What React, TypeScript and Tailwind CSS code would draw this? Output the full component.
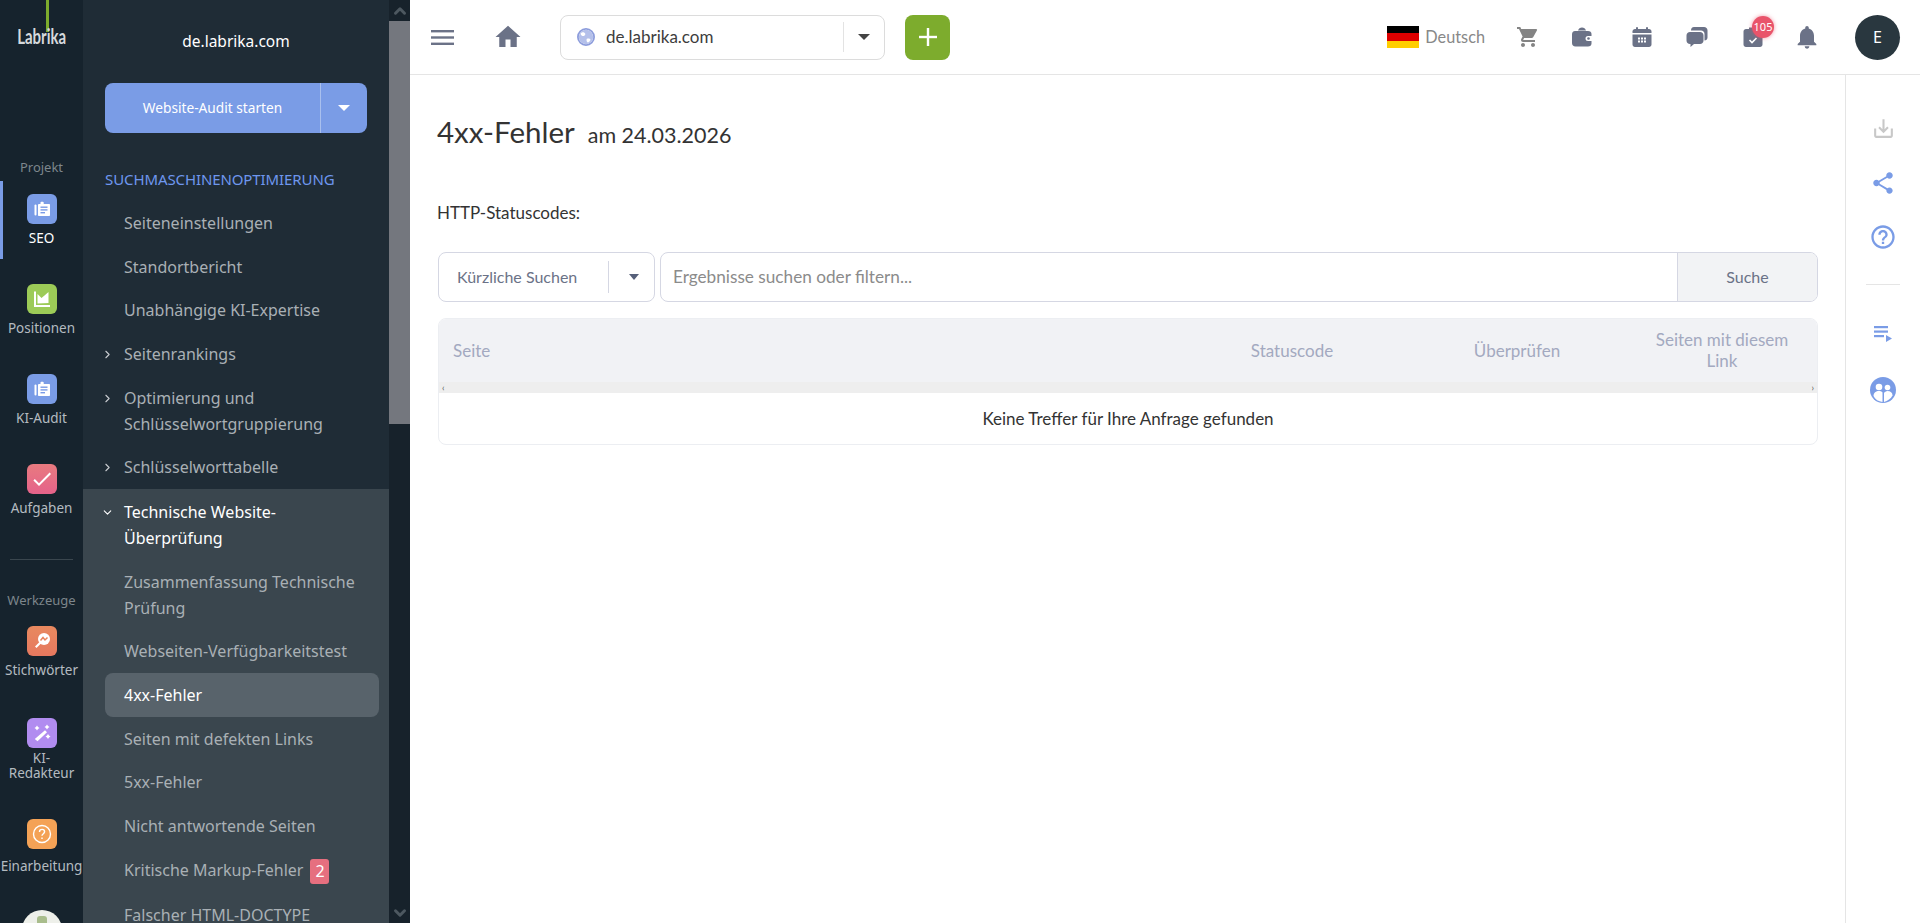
import { MdHome, MdShoppingCart, MdNotifications, MdShare, MdHelpOutline, MdSaveAlt, MdOutlineCheck } from "react-icons/md";
import { FiChevronRight, FiChevronDown, FiChevronUp } from "react-icons/fi";

const pt = "font-['Lato','Noto_Sans',sans-serif]";

function ClipboardIcon() {
  return (
    <svg viewBox="0 0 20 20" className="w-[20px] h-[20px]" fill="#fff">
      <path d="M7 5h1.5V3.6c0-.5.4-.9.9-.9h1.4c.5 0 .9.4.9.9V5H17c.6 0 1 .4 1 1v10c0 .6-.4 1-1 1H7c-.5 0-1-.4-1-1V6c0-.5.5-1 1-1z" />
      <rect x="2.5" y="5.5" width="2" height="11" rx="1" />
      <rect x="8.5" y="7.5" width="7" height="1.4" fill="#7a9ce6" />
      <rect x="8.5" y="10.2" width="7" height="1.4" fill="#7a9ce6" />
      <rect x="8.5" y="13" width="4.5" height="1.4" fill="#7a9ce6" />
    </svg>
  );
}

function ChartIcon() {
  return (
    <svg viewBox="0 0 20 20" className="w-[20px] h-[20px]" fill="#fff">
      <path d="M2 2.5h2V16h14v2H2z" />
      <path d="M5.5 14.5V5l4 4 3-2.5 4-3.5v11z" />
    </svg>
  );
}

function MagnifierIcon() {
  return (
    <svg viewBox="0 0 20 20" className="w-[20px] h-[20px]" fill="#fff">
      <circle cx="12" cy="8" r="6" />
      <path d="M7.5 11 3 15.5 4.5 17 9 12.5z" />
      <path d="M8.5 9.5 11 6.5l2 2.5 2.5-2.5" fill="none" stroke="#e8835c" strokeWidth="1.5" />
    </svg>
  );
}

function WandIcon() {
  return (
    <svg viewBox="0 0 20 20" className="w-[20px] h-[20px]" fill="#fff">
      <path d="M13 7.2 15 9.2 5.5 18.2 2.8 16z" />
      <path d="M5 2.5 6 4l1.5 1L6 6 5 7.5 4 6 2.5 5 4 4zM15 1.5 16 3l1.5 1L16 5l-1 1.5L14 5l-1.5-1L14 3zM16 11l1 1.5 1.5 1-1.5 1-1 1.5-1-1.5-1.5-1 1.5-1z" />
    </svg>
  );
}

function RailItem({ label, bg, active, spacing = "mb-[12px]", labelGap = "mt-[6px]", children }: { label: React.ReactNode; bg: string; active?: boolean; spacing?: string; labelGap?: string; children: React.ReactNode }) {
  return (
    <div className={`shrink-0 flex flex-col items-center pt-[13px] min-h-[78px] ${spacing} ${active ? "border-l-[3px] border-[#7a9ce6] text-white pr-[3px]" : "text-[#b4bbc0]"}`}>
      <div className={`w-[30px] h-[30px] rounded-[6px] flex items-center justify-center ${bg}`}>{children}</div>
      <div className={`${labelGap} text-[13.5px] leading-[17px] text-center`}>{label}</div>
    </div>
  );
}

function NavItem({ label, arrow, current, open, badge }: { label: React.ReactNode; arrow?: "right" | "down"; current?: boolean; open?: boolean; badge?: string }) {
  return (
    <div className={`relative pl-[19px] pr-[10px] py-[8.85px] text-[16px] leading-[26px] whitespace-nowrap rounded-[8px] ${current ? "bg-[#58636b] text-white" : open ? "text-white" : "text-[#a9b0b5]"}`}>
      {arrow === "right" && <FiChevronRight className="absolute left-[-4px] top-[16px] w-[13px] h-[13px] text-[#c8ccd0]" />}
      {arrow === "down" && <FiChevronDown className="absolute left-[-4px] top-[16px] w-[13px] h-[13px] text-white" />}
      {label}
      {badge && <span className="inline-block align-middle ml-[7px] w-[19px] h-[25px] leading-[25px] text-center rounded-[3px] bg-[#e66f7f] text-white">{badge}</span>}
    </div>
  );
}

function TopIconSlot({ children }: { children: React.ReactNode }) {
  return <div className="flex items-center justify-center w-[20px] h-[24px] text-[#6b7287] [&>svg]:shrink-0">{children}</div>;
}

export default function App() {
  return (
    <div className="flex h-[923px] w-[1920px] overflow-hidden bg-white font-['Noto_Sans',sans-serif]">
      {/* Icon rail */}
      <aside className="w-[83px] shrink-0 bg-[#16232d] flex flex-col">
        <div className="h-[151px] shrink-0 flex flex-col items-center">
          <div className="w-[3px] h-[32px] ml-[12px] bg-[#7dac2d]" />
          <div className="mt-[-5px] text-[#d5d9dc] text-[20px] leading-[18px] font-bold font-['Liberation_Sans_Narrow','Lato',sans-serif] scale-x-[0.75]">Labrika</div>
        </div>
        <div className="shrink-0 text-center text-[13px] leading-[18px] text-[#7d868c] mt-[7px] mb-[5px]">Projekt</div>
        <RailItem label="SEO" bg="bg-[#7a9ce6]" active><ClipboardIcon /></RailItem>
        <RailItem label="Positionen" bg="bg-[#9ccb57]"><ChartIcon /></RailItem>
        <RailItem label="KI-Audit" bg="bg-[#7a9ce6]"><ClipboardIcon /></RailItem>
        <RailItem label="Aufgaben" bg="bg-gradient-to-b from-[#e87a7f] to-[#e5628a]"><MdOutlineCheck className="w-[24px] h-[24px] text-white" /></RailItem>
        <div className="shrink-0 mx-[10px] mt-[18px] border-t border-[#3a464e]" />
        <div className="shrink-0 text-center text-[13px] leading-[18px] text-[#7d868c] mt-[31px] mb-[4px]">Werkzeuge</div>
        <RailItem label="Stichwörter" bg="bg-gradient-to-b from-[#e8895f] to-[#e6785f]" spacing="mb-[14px]"><MagnifierIcon /></RailItem>
        <RailItem label={<span className="block leading-[15px]">KI-<br />Redakteur</span>} labelGap="mt-[3px]" bg="bg-[#b18cf0]" spacing="mb-[23px]"><WandIcon /></RailItem>
        <RailItem label="Einarbeitung" labelGap="mt-[9px]" bg="bg-[#f4a256]" spacing="mb-[11px]">
          <svg viewBox="0 0 20 20" className="w-[20px] h-[20px]" fill="none" stroke="#fff" strokeWidth="1.4">
            <circle cx="10" cy="10" r="8.5" />
            <path d="M7.5 8c0-1.6 1.1-2.6 2.6-2.6S12.6 6.400 12.600 7.800c0 1.800-2.600 2-2.600 4" />
            <path d="M10 13.500v1.500" />
          </svg>
        </RailItem>
        <div className="mt-[15px] mx-auto w-[40px] h-[40px] rounded-full bg-[#eef0ea] shrink-0 flex justify-center pt-[6px]">
          <div className="w-[10px] h-[10px] rounded-[3px] bg-[#a9bd8c]" />
        </div>
      </aside>

      {/* Nav panel */}
      <nav className="w-[306px] shrink-0 bg-[#1f2c36] flex flex-col overflow-hidden">
        <div className="h-[83px] pt-[1px] flex items-center justify-center text-white text-[15.5px]">de.labrika.com</div>
        <div className="mx-[22px] w-[262px] h-[50px] shrink-0 rounded-[8px] bg-[#7a9ce6] flex text-white text-[13.7px]">
          <div className="w-[216px] flex items-center justify-center border-r border-[#a9c0ee]">Website-Audit starten</div>
          <div className="flex-1 flex items-center justify-center">
            <span className="w-0 h-0 border-x-[6px] border-x-transparent border-t-[6px] border-t-white" />
          </div>
        </div>
        <div className="ml-[22px] mt-[33px] text-[#6e97ee] text-[15px] leading-[26px] tracking-[-0.1px]">SUCHMASCHINENOPTIMIERUNG</div>
        <div className="mt-[9px] px-[22px]">
          <NavItem label="Seiteneinstellungen" />
          <NavItem label="Standortbericht" />
          <NavItem label="Unabhängige KI-Expertise" />
          <NavItem label="Seitenrankings" arrow="right" />
          <NavItem label={<>Optimierung und<br />Schlüsselwortgruppierung</>} arrow="right" />
          <NavItem label="Schlüsselworttabelle" arrow="right" />
        </div>
        <div className="bg-[#3a464e] pt-[1px] px-[22px] pr-[10px] flex-1 min-h-0">
          <NavItem label={<>Technische Website-<br />Überprüfung</>} arrow="down" open />
          <NavItem label={<>Zusammenfassung Technische<br />Prüfung</>} />
          <NavItem label="Webseiten-Verfügbarkeitstest" />
          <NavItem label="4xx-Fehler" current />
          <NavItem label="Seiten mit defekten Links" />
          <NavItem label="5xx-Fehler" />
          <NavItem label="Nicht antwortende Seiten" />
          <NavItem label="Kritische Markup-Fehler" badge="2" />
          <NavItem label="Falscher HTML-DOCTYPE" />
        </div>
      </nav>

      {/* Sidebar scrollbar */}
      <div className="w-[21px] shrink-0 bg-[#17222b] flex flex-col">
        <div className="h-[21px] flex items-center justify-center"><FiChevronUp className="w-[18px] h-[18px] text-[#4d5860]" strokeWidth={4} /></div>
        <div className="h-[403px] bg-[#74777e]" />
        <div className="flex-1" />
        <div className="h-[21px] flex items-center justify-center"><FiChevronDown className="w-[18px] h-[18px] text-[#4d5860]" strokeWidth={4} /></div>
      </div>

      {/* Main */}
      <div className="flex-1 min-w-0 flex flex-col">
        <header className="h-[75px] shrink-0 border-b border-[#e5e5e5] flex items-center pl-[21px] pr-[20px]">
          <svg viewBox="0 0 23 15" className="w-[23px] h-[15px]" fill="#6b7287">
            <rect width="23" height="2.400" y="0" />
            <rect width="23" height="2.400" y="6.300" />
            <rect width="23" height="2.400" y="12.600" />
          </svg>
          <MdHome className="ml-[39px] w-[30px] h-[30px] text-[#6b7287]" />
          <div className="ml-[37px] w-[325px] h-[45px] rounded-[8px] border border-[#dcdcdc] flex items-center">
            <svg viewBox="0 0 20 20" className="ml-[16px] w-[18px] h-[18px]">
              <circle cx="10" cy="10" r="9" fill="#fff" stroke="#8d9ddc" strokeWidth="2" />
              <circle cx="10" cy="10" r="8" fill="#b4c0ea" />
              <path d="M4 6c2-2 4-1 5 0s-1 3-2 3-3-1-3-3zM11 12c2-1 4 0 4 1s-2 3-3 3-2-3-1-4z" fill="#fff" />
            </svg>
            <span className="ml-[11px] text-[17px] text-[#3d3d3d] font-['Lato',sans-serif] flex-1">de.labrika.com</span>
            <div className="w-px h-[30px] bg-[#e3e3e3]" />
            <span className="mx-[14px] w-0 h-0 border-x-[6px] border-x-transparent border-t-[6px] border-t-[#444]" />
          </div>
          <div className="ml-[20px] w-[45px] h-[45px] rounded-[8px] bg-[#7dac2d] flex items-center justify-center">
            <svg viewBox="0 0 20 20" className="w-[20px] h-[20px]" fill="#fff"><rect x="8.800" y="1" width="2.400" height="18" /><rect x="1" y="8.800" width="18" height="2.400" /></svg>
          </div>
          <div className="ml-auto flex items-center">
            <div className="w-[32px] h-[22px] flex flex-col">
              <div className="flex-1 bg-black" /><div className="flex-1 bg-[#dd0000]" /><div className="flex-1 bg-[#ffce00]" />
            </div>
            <span className={`ml-[6px] text-[16.3px] text-[#888] ${pt}`}>Deutsch</span>
            <div className="ml-[31px] w-[22px] text-[#848484]"><MdShoppingCart className="w-[24px] h-[24px]" /></div>
            <div className="ml-[34px]"><TopIconSlot>
              <svg viewBox="0 0 22 22" className="w-[22px] h-[22px]" fill="#6b7287">
                <path d="M7 4.500c.6-2 2-3 4-3s3.400 1 4 3z" />
                <path d="M4 5h13c2.200 0 3.500 1.300 3.500 3v2H17a2.500 2.500 0 0 0 0 5h3.500v2.500c0 1.800-1.300 3-3.500 3H4.500C2.300 20.500 1 19.200 1 17V8.500C1 6.300 2 5 4 5z" />
                <circle cx="17.500" cy="12.500" r="1.300" />
              </svg>
            </TopIconSlot></div>
            <div className="ml-[40px]"><TopIconSlot>
              <svg viewBox="0 0 20 22" className="w-[20px] h-[22px]" fill="#6b7287">
                <rect x="4" y="1" width="2" height="4" rx="1" />
                <rect x="14" y="1" width="2" height="4" rx="1" />
                <path d="M3 3h14c1.400 0 2.500 1.100 2.500 2.500V7H.5V5.500C.500 4.100 1.600 3 3 3z" />
                <path fillRule="evenodd" d="M.5 8.500h19v10c0 1.400-1.100 2.500-2.500 2.500H3C1.600 21 .5 19.900.5 18.500zM6 11.500v2h2v-2zm3 0v2h2v-2zm3 0v2h2v-2zm-6 3v2h2v-2zm3 0v2h2v-2zm3 0v2h2v-2z" />
              </svg>
            </TopIconSlot></div>
            <div className="ml-[35px]"><TopIconSlot>
              <svg viewBox="0 0 22 22" className="w-[22px] h-[22px]" fill="#6b7287">
                <path d="M8 1h10c2 0 3.500 1.500 3.500 3.500v7c0 2-1.400 3-3 3V8c0-2-1.500-3.500-3.500-3.500H5C5 2.500 6 1 8 1z" />
                <path d="M4 6h10c2 0 3.500 1.500 3.500 3.500v5c0 2-1.500 3.500-3.500 3.500H8l-3.500 3v-3H4c-2 0-3.500-1.500-3.500-3.500v-5C.5 7.500 2 6 4 6z" />
              </svg>
            </TopIconSlot></div>
            <div className="relative ml-[36px]"><TopIconSlot>
              <svg viewBox="0 0 20 22" className="w-[20px] h-[22px]" fill="#6b7287">
                <path d="M3 3h3V1.500h8V3h3c1.400 0 2.500 1.100 2.500 2.500v13c0 1.400-1.100 2.500-2.500 2.500H3C1.600 21 .5 19.900.5 18.500v-13C.5 4.100 1.600 3 3 3z" />
                <path d="M6.500 14l2.500 2.500 4.500-4.500" fill="none" stroke="#fff" strokeWidth="1.600" />
              </svg>
            </TopIconSlot>
              <span className="absolute left-[9px] top-[-9px] w-[22px] h-[22px] rounded-full bg-[#e9546b] text-white text-[11px] leading-[22px] text-center shadow-[0_0_4px_rgba(233,84,107,0.6)]">105</span>
            </div>
            <div className="ml-[34px]"><TopIconSlot><MdNotifications className="w-[28px] h-[28px]" /></TopIconSlot></div>
            <div className="ml-[38px] w-[45px] h-[45px] rounded-full bg-[#29373f] flex items-center justify-center text-white text-[16px]">E</div>
          </div>
        </header>

        <div className="flex-1 min-h-0 flex">
          <main className={`flex-1 min-w-0 pl-[28px] pr-[27px] text-[#333] ${pt}`}>
            <div className="mt-[36px] ml-[-1px] flex items-baseline h-[42px]">
              <h1 className="text-[29.5px] leading-[42px] text-[#333]">4xx-Fehler</h1>
              <span className="ml-[13px] text-[21.5px] text-[#333]">am 24.03.2026</span>
            </div>
            <div className="mt-[48px] ml-[-1px] text-[17px] leading-[24px]">HTTP-Statuscodes:</div>
            <div className="mt-[27px] flex h-[50px] gap-[5px]">
              <div className="w-[217px] rounded-[8px] border border-[#d5d7e3] flex items-center pl-[18px]">
                <span className="text-[16px] text-[#6b7287] flex-1 whitespace-nowrap">Kürzliche Suchen</span>
                <div className="w-px h-[32px] bg-[#d5d7e3]" />
                <span className="ml-[20px] mr-[15px] w-0 h-0 border-x-[5px] border-x-transparent border-t-[6px] border-t-[#56607a]" />
              </div>
              <div className="flex-1 rounded-[8px] border border-[#d5d7e3] flex overflow-hidden">
                <span className="flex-1 pl-[12px] text-[17.2px] leading-[48px] text-[#8b8b8b]">Ergebnisse suchen oder filtern...</span>
                <span className="w-[140px] border-l border-[#d5d7e3] bg-[#f2f3f5] text-center text-[16px] leading-[48px] text-[#6b7287]">Suche</span>
              </div>
            </div>
            <div className="mt-[16px] rounded-[8px] border border-[#eceef2] overflow-hidden">
              <div className="h-[63px] bg-[#f1f2f5] flex items-center text-[17px] text-[#a3a9c0]">
                <div className="pl-[14px] flex-1">Seite</div>
                <div className="w-[230px] text-center">Statuscode</div>
                <div className="w-[220px] text-center">Überprüfen</div>
                <div className="w-[190px] text-center leading-[21px] mt-[-2px]">Seiten mit diesem<br />Link</div>
              </div>
              <div className="h-[11px] bg-[#eeeeee] flex items-center justify-between px-[3px] text-[9px] leading-[11px] text-[#555]">
                <span>‹</span><span>›</span>
              </div>
              <div className="h-[51px] flex items-center justify-center text-[17px] text-[#333]">Keine Treffer für Ihre Anfrage gefunden</div>
            </div>
          </main>
          <aside className="w-[75px] shrink-0 border-l border-[#e5e5e5] flex flex-col items-center text-[#7a9ce6]">
            <MdSaveAlt className="mt-[41px] w-[25px] h-[25px] text-[#c8c8c8]" />
            <MdShare className="mt-[29px] w-[26px] h-[26px]" />
            <MdHelpOutline className="mt-[27px] w-[28px] h-[28px]" />
            <div className="mt-[33px] w-[34px] border-t border-[#e5e5e5]" />
            <div className="mt-[40px] relative w-[20px] h-[18px]">
              <svg viewBox="0 0 20 18" className="w-[20px] h-[18px]" fill="#7a9ce6">
                <rect x="1" y="1" width="14" height="2.200" />
                <rect x="1" y="5.500" width="14" height="2.200" />
                <rect x="1" y="10" width="10" height="2.200" />
                <path d="M13 10l6 3.500-6 3.500z" />
              </svg>
            </div>
            <svg viewBox="0 0 26 26" className="mt-[34px] w-[26px] h-[26px]">
              <circle cx="13" cy="13" r="13" fill="#7a9ce6" />
              <circle cx="9" cy="10" r="3.300" fill="#fff" />
              <circle cx="17.500" cy="10.500" r="2.800" fill="#fff" />
              <path d="M3.500 19c0-3.500 2.500-5 5.500-5 1.500 0 3 .5 3.500 1.500v9.500c-4-.5-7.500-2.500-9-6z" fill="#fff" />
              <path d="M14 16c.5-1 2-2 3.500-2 3 0 5 1.500 5 4.500-1.500 3-5 5.500-8.500 6.500z" fill="#fff" />
            </svg>
          </aside>
        </div>
      </div>
    </div>
  );
}
